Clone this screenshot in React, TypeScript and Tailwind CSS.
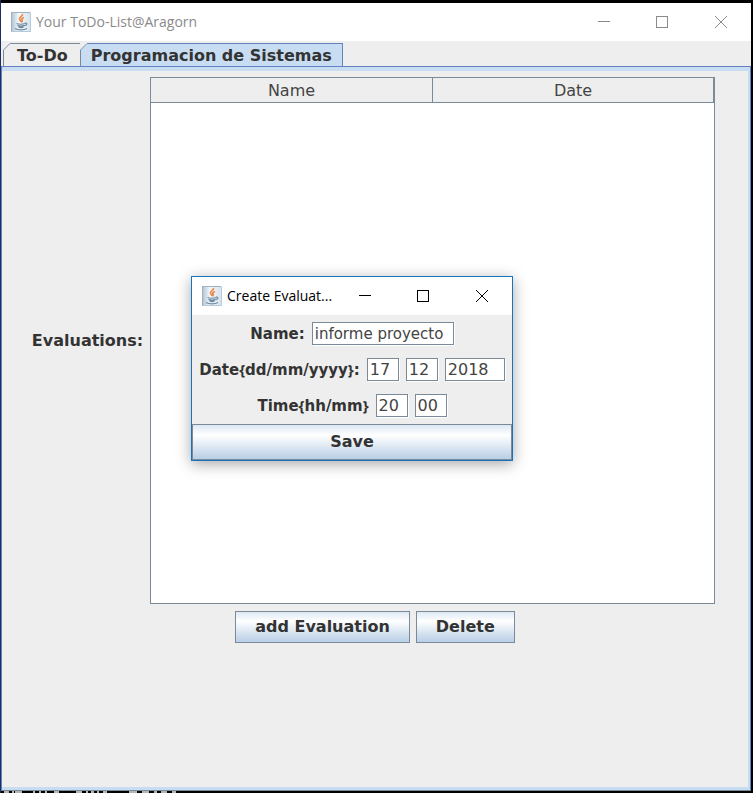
import { useState } from "react";

const JavaIcon = () => (
  <svg width="20" height="20" viewBox="0 0 20 20" aria-hidden="true">
    <defs>
      <linearGradient id="cup-bg" x1="0" y1="0" x2="1" y2="0">
        <stop offset="0" stopColor="#a9c0d2" />
        <stop offset="0.4" stopColor="#f6f8fa" />
        <stop offset="1" stopColor="#d5e2ec" />
      </linearGradient>
    </defs>
    <rect width="20" height="20" fill="url(#cup-bg)" />
    <path d="M0.500 19.500V0.500H19" fill="none" stroke="#9fb1bf" />
    <path d="M19.500 1v18.500H1" fill="none" stroke="#b4cbdf" />
    <path
      d="M11.500 2c.8 2.200-3.500 3-3 5 .3 1.300 1.700 1.700 1.500 3.200M13 5.500c-2.300.8-2.600 1.600-1.900 2.700.5.900.1 1.500-.7 2"
      fill="none"
      stroke="#e98a4c"
      strokeWidth="1.700"
    />
    <path
      d="M5.500 11.500c2 .8 6.500.8 8.500 0M6.500 13.300c2 .9 5 .9 7 0M7.500 15.100c1.500.5 3.500.5 5 0M14 11.200c2.500-.5 2.500 2-.3 2.500M4 16.500c3 1.800 9 1.800 12 0"
      fill="none"
      stroke="#6d8ca2"
      strokeWidth="1.300"
    />
  </svg>
);

const WindowControls = () => (
  <div className="flex">
    <button type="button" aria-label="Minimize" className="flex h-9 w-[58px] items-center justify-center">
      <svg width="12" height="12" stroke="currentColor" fill="none">
        <path d="M0 5.500h12" />
      </svg>
    </button>
    <button type="button" aria-label="Maximize" className="flex h-9 w-[58px] items-center justify-center">
      <svg width="12" height="12" stroke="currentColor" fill="none">
        <rect x="0.500" y="0.500" width="11" height="11" />
      </svg>
    </button>
    <button type="button" aria-label="Close" className="flex h-9 w-[60px] items-center justify-center">
      <svg width="12" height="12" stroke="currentColor" fill="none">
        <path d="M0 0l12 12M12 0L0 12" />
      </svg>
    </button>
  </div>
);

// Cut-off top left corner of a Metal tab
const TabCorner = () => (
  <svg width="8" height="8" className="absolute -top-px -left-px" aria-hidden="true">
    <path d="M0 0h8L0 8z" fill="#eeeeee" />
    <path d="M0.500 8V7L7 0.500h1" fill="none" stroke="#7a8fb5" />
  </svg>
);

const Brace = ({ children }: { children: string }) => (
  <span className="font-['Noto_Sans',sans-serif]">{children}</span>
);

const metalButton =
  "border border-[#7a8a99] bg-linear-to-b from-[#dde8f3] via-white via-30% to-[#b8cfe5] font-bold";

const metalField =
  "h-[23px] border border-[#7a8a99] bg-white pl-[2px] text-[#444444] outline-none shadow-[1px_1px_0_#ffffff]";

const CreateEvaluationDialog = () => {
  const [form, setForm] = useState({
    name: "informe proyecto",
    day: "17",
    month: "12",
    year: "2018",
    hour: "20",
    minute: "00",
  });

  const update = (e: React.ChangeEvent<HTMLInputElement>) => {
    setForm({ ...form, [e.target.name]: e.target.value });
  };

  return (
    <form
      role="dialog"
      aria-label="Create Evaluation"
      onSubmit={(e) => e.preventDefault()}
      className="absolute top-[276px] left-[190px] w-[322px] border border-[#1873bd] bg-[#eeeeee] shadow-[0_3px_14px_rgba(0,0,0,0.35)]"
    >
      <div className="flex h-[38px] items-center bg-white pl-[10px] text-black">
        <JavaIcon />
        <h2 className="ml-[5px] flex-1 font-['Open_Sans','Noto_Sans',sans-serif] text-[14px] whitespace-nowrap">
          Create Evaluat...
        </h2>
        <WindowControls />
      </div>
      <div className="flex flex-col gap-[13px] py-[7px] text-[15px]">
        <div className="flex items-center justify-center gap-[7px]">
          <label htmlFor="name" className="font-bold">Name:</label>
          <input id="name" name="name" value={form.name} onChange={update} className={`${metalField} w-[142px] text-[15px]`} />
        </div>
        <div className="flex items-center justify-center gap-[7px]">
          <label htmlFor="day" className="font-bold">
            Date<Brace>{"{"}</Brace>dd/mm/yyyy<Brace>{"}"}</Brace>:
          </label>
          <input id="day" name="day" value={form.day} onChange={update} className={`${metalField} w-8 text-[16px]`} />
          <input name="month" aria-label="Month" value={form.month} onChange={update} className={`${metalField} w-8 text-[16px]`} />
          <input name="year" aria-label="Year" value={form.year} onChange={update} className={`${metalField} w-[60px] text-[16px]`} />
        </div>
        <div className="flex items-center justify-center gap-[7px]">
          <label htmlFor="hour" className="font-bold">
            Time<Brace>{"{"}</Brace>hh/mm<Brace>{"}"}</Brace>
          </label>
          <input id="hour" name="hour" value={form.hour} onChange={update} className={`${metalField} w-8 text-[16px]`} />
          <input name="minute" aria-label="Minute" value={form.minute} onChange={update} className={`${metalField} w-8 text-[16px]`} />
        </div>
      </div>
      <button type="submit" className={`${metalButton} block h-9 w-full`}>
        Save
      </button>
    </form>
  );
};

const App = () => {
  const [tab, setTab] = useState("course");

  return (
    <div className="relative flex min-h-screen flex-col border-l border-[#1b2f5e] bg-black pt-[3px] pr-[2px] font-['DejaVu_Sans',sans-serif] text-[16px] leading-5 text-[#333333]">
      <main className="flex flex-1 flex-col bg-[#eeeeee]">
        <header className="flex h-[38px] items-center bg-white pl-[10px] text-[#8a8a8a]">
          <JavaIcon />
          <h1 className="ml-[5px] flex-1 font-['Open_Sans','Noto_Sans',sans-serif] text-[14px]">
            Your ToDo-List@Aragorn
          </h1>
          <WindowControls />
        </header>

        <div role="tablist" className="flex h-[25px] items-end pl-[2px]">
          <button
            type="button"
            role="tab"
            aria-selected={tab === "todo"}
            onClick={() => setTab("todo")}
            className="relative h-[23px] border border-b-0 border-[#7a8a99] pt-px pr-3 pl-[13px] font-bold"
          >
            <TabCorner />
            To-Do
          </button>
          <button
            type="button"
            role="tab"
            aria-selected={tab === "course"}
            onClick={() => setTab("course")}
            className="relative h-[23px] border border-b-0 border-l-0 border-[#6382bf] bg-[#c8ddf2] px-[10px] pt-px font-bold"
          >
            <TabCorner />
            Programacion de Sistemas
          </button>
        </div>

        <section role="tabpanel" className="flex flex-1 flex-col border border-[#6382bf] border-b-[#7a8a99]">
          <div className="flex-1 border-t-4 border-r-2 border-b-3 border-[#c8ddf2] pt-[6px]">
            <div className="flex items-center justify-center gap-[7px] pr-[3px]">
              <span className="font-bold">Evaluations:</span>
              <div className="h-[527px] w-[565px] border border-[#7a8a99] bg-white">
                <table className="w-full table-fixed border-collapse bg-[#eeeeee] text-[#444444]">
                  <thead>
                    <tr className="h-6">
                      <th className="border-r border-b border-[#7a8a99] pt-[2px] font-normal">Name</th>
                      <th className="border-r border-b border-[#7a8a99] pt-[2px] font-normal">Date</th>
                    </tr>
                  </thead>
                </table>
              </div>
            </div>
            <div className="mt-[7px] flex justify-center gap-[6px]">
              <button type="button" className={`${metalButton} h-8 px-[19px]`}>add Evaluation</button>
              <button type="button" className={`${metalButton} h-8 px-[19px]`}>Delete</button>
            </div>
          </div>
        </section>
      </main>
      {/* Tops of the console line behind the window */}
      <svg width="176" height="2" aria-hidden="true">
        <path
          d="M3 1h5M11 1h2M14 1h7M32 1h2M38 1h2M44 1h2M53 1h5M75 1h6M85 1h2M90 1h3M96 1h2M102 1h4M128 1h8M141 1h7M153 1h3M160 1h6M171 1h4"
          stroke="#b5b5b5"
          strokeWidth="2"
        />
      </svg>
      <CreateEvaluationDialog />
    </div>
  );
};

export default App;
